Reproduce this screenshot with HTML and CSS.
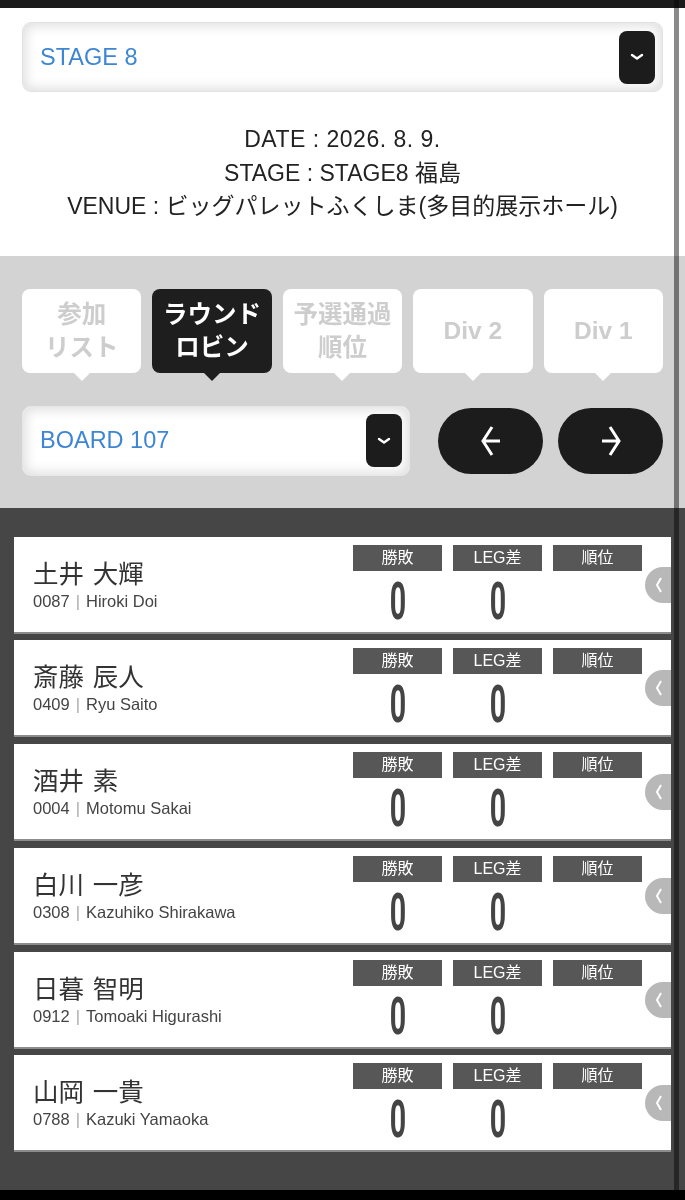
FILE: index.html
```html
<!DOCTYPE html>
<html lang="ja">
<head>
<meta charset="utf-8">
<title>STAGE 8</title>
<link rel="stylesheet" href="styles.css">
</head>
<body>
<div class="page">
<div class="topbar"></div>
<section class="head">
  <div class="select stage-select">
    <span class="select-text">STAGE 8</span>
    <span class="select-btn"><svg width="14" height="8" viewBox="0 0 14 8"><path d="M2 2 L7 5.5 L12 2" fill="none" stroke="#fff" stroke-width="2.4" stroke-linecap="round" stroke-linejoin="round"/></svg></span>
  </div>
  <div class="info">
    <p>DATE : 2026. 8. 9.</p>
    <p>STAGE : STAGE8 福島</p>
    <p>VENUE : ビッグパレットふくしま(多目的展示ホール)</p>
  </div>
</section>
<section class="controls">
  <nav class="tabs">
    <div class="tab">参加<br>リスト</div>
    <div class="tab active">ラウンド<br>ロビン</div>
    <div class="tab">予選通過<br>順位</div>
    <div class="tab">Div 2</div>
    <div class="tab">Div 1</div>
  </nav>
  <div class="board-row">
    <div class="select board-select">
      <span class="select-text">BOARD 107</span>
      <span class="select-btn"><svg width="14" height="8" viewBox="0 0 14 8"><path d="M2 2 L7 5.5 L12 2" fill="none" stroke="#fff" stroke-width="2.4" stroke-linecap="round" stroke-linejoin="round"/></svg></span>
    </div>
    <button class="nav-btn"><svg width="24" height="32" viewBox="0 0 24 32"><path d="M13 2 L4 16 L13 30 M4 16 H21" fill="none" stroke="#fff" stroke-width="3"/></svg></button>
    <button class="nav-btn"><svg width="24" height="32" viewBox="0 0 24 32"><path d="M11 2 L20 16 L11 30 M20 16 H3" fill="none" stroke="#fff" stroke-width="3"/></svg></button>
  </div>
</section>
<section class="players">
  <div class="card">
    <div class="player"><div class="name">土井 大輝</div><div class="sub">0087<span class="bar">|</span>Hiroki Doi</div></div>
    <div class="stats"><div class="sh">勝敗</div><div class="sh">LEG差</div><div class="sh">順位</div><div class="sv"><span>0</span></div><div class="sv"><span>0</span></div><div class="sv"></div></div>
    <div class="handle"><svg width="10" height="18" viewBox="0 0 10 18"><path d="M7 2 L3 9 L7 16" fill="none" stroke="#fff" stroke-width="2"/></svg></div>
  </div>
  <div class="card">
    <div class="player"><div class="name">斎藤 辰人</div><div class="sub">0409<span class="bar">|</span>Ryu Saito</div></div>
    <div class="stats"><div class="sh">勝敗</div><div class="sh">LEG差</div><div class="sh">順位</div><div class="sv"><span>0</span></div><div class="sv"><span>0</span></div><div class="sv"></div></div>
    <div class="handle"><svg width="10" height="18" viewBox="0 0 10 18"><path d="M7 2 L3 9 L7 16" fill="none" stroke="#fff" stroke-width="2"/></svg></div>
  </div>
  <div class="card">
    <div class="player"><div class="name">酒井 素</div><div class="sub">0004<span class="bar">|</span>Motomu Sakai</div></div>
    <div class="stats"><div class="sh">勝敗</div><div class="sh">LEG差</div><div class="sh">順位</div><div class="sv"><span>0</span></div><div class="sv"><span>0</span></div><div class="sv"></div></div>
    <div class="handle"><svg width="10" height="18" viewBox="0 0 10 18"><path d="M7 2 L3 9 L7 16" fill="none" stroke="#fff" stroke-width="2"/></svg></div>
  </div>
  <div class="card">
    <div class="player"><div class="name">白川 一彦</div><div class="sub">0308<span class="bar">|</span>Kazuhiko Shirakawa</div></div>
    <div class="stats"><div class="sh">勝敗</div><div class="sh">LEG差</div><div class="sh">順位</div><div class="sv"><span>0</span></div><div class="sv"><span>0</span></div><div class="sv"></div></div>
    <div class="handle"><svg width="10" height="18" viewBox="0 0 10 18"><path d="M7 2 L3 9 L7 16" fill="none" stroke="#fff" stroke-width="2"/></svg></div>
  </div>
  <div class="card">
    <div class="player"><div class="name">日暮 智明</div><div class="sub">0912<span class="bar">|</span>Tomoaki Higurashi</div></div>
    <div class="stats"><div class="sh">勝敗</div><div class="sh">LEG差</div><div class="sh">順位</div><div class="sv"><span>0</span></div><div class="sv"><span>0</span></div><div class="sv"></div></div>
    <div class="handle"><svg width="10" height="18" viewBox="0 0 10 18"><path d="M7 2 L3 9 L7 16" fill="none" stroke="#fff" stroke-width="2"/></svg></div>
  </div>
  <div class="card">
    <div class="player"><div class="name">山岡 一貴</div><div class="sub">0788<span class="bar">|</span>Kazuki Yamaoka</div></div>
    <div class="stats"><div class="sh">勝敗</div><div class="sh">LEG差</div><div class="sh">順位</div><div class="sv"><span>0</span></div><div class="sv"><span>0</span></div><div class="sv"></div></div>
    <div class="handle"><svg width="10" height="18" viewBox="0 0 10 18"><path d="M7 2 L3 9 L7 16" fill="none" stroke="#fff" stroke-width="2"/></svg></div>
  </div>
</section>
<div class="bottombar"></div>
<div class="scrollline"></div>
</div>
</body>
</html>
```
FILE: styles.css
```css
* { box-sizing: border-box; }
html, body { margin: 0; padding: 0; }
body {
  background: #000;
  font-family: "Liberation Sans", "Noto Sans CJK JP", sans-serif;
}
.page {
  position: relative;
  width: 685px;
}
.topbar { height: 8px; background: #1b1b1b; }
.bottombar { height: 9px; background: #000; }

.head {
  background: #fff;
  padding: 14px 22px 32px;
}
.select {
  display: flex;
  align-items: center;
  justify-content: space-between;
  height: 70px;
  background: #fff;
  border-radius: 9px;
  border: 1px solid #e2e2e2;
  box-shadow: inset 0 0 12px 3px rgba(0,0,0,0.13);
  padding: 0 7px 0 17px;
}
.select-text {
  color: #3d86d3;
  font-size: 23.5px;
}
.select-btn {
  width: 36px;
  height: 53px;
  background: #1c1c1c;
  border-radius: 8px;
  display: flex;
  align-items: center;
  justify-content: center;
}
.info {
  margin-top: 31px;
  text-align: center;
  color: #222;
  font-size: 23px;
  line-height: 33.5px;
}
.info p { margin: 0; }
.info p:first-child { letter-spacing: 0.5px; }

.controls {
  background: #d3d3d3;
  padding: 33px 22px 32px;
}
.tabs {
  display: grid;
  grid-template-columns: repeat(5, 1fr);
  gap: 11px;
}
.tab {
  position: relative;
  height: 84px;
  background: #fff;
  border-radius: 8px;
  color: #cdcdcd;
  font-weight: bold;
  font-size: 24.5px;
  line-height: 33px;
  display: flex;
  align-items: center;
  justify-content: center;
  text-align: center;
}
.tab::after {
  content: "";
  position: absolute;
  left: 50%;
  bottom: -8px;
  margin-left: -8px;
  border-left: 8px solid transparent;
  border-right: 8px solid transparent;
  border-top: 8px solid #fff;
}
.tab.active { background: #1e1e1e; color: #fff; }
.tab.active::after { border-top-color: #1e1e1e; }

.board-row {
  display: flex;
  align-items: center;
  margin-top: 33px;
}
.board-select {
  width: 388px;
  border-color: #e6e6e6;
}
.nav-btn {
  width: 105px;
  height: 66px;
  border: 0;
  border-radius: 33px;
  background: #1c1c1c;
  display: flex;
  align-items: center;
  justify-content: center;
  padding: 0;
  margin-left: 28px;
}
.nav-btn + .nav-btn { margin-left: 15px; }

.players {
  background: #464646;
  padding: 29px 14px 38px;
  display: flex;
  flex-direction: column;
  gap: 6.8px;
}
.card {
  height: 97px;
  background: #fff;
  border-bottom: 2px solid #8c8c8c;
  display: flex;
  padding-left: 19px;
}
.player {
  flex: 1;
  padding-top: 20px;
}
.name {
  font-family: "Noto Sans CJK JP", sans-serif;
  font-size: 25.5px;
  line-height: 30px;
  color: #333;
  word-spacing: 3px;
}
.sub {
  margin-top: 4px;
  font-size: 16.5px;
  line-height: 20px;
  color: #444;
}
.bar { color: #aaa; margin: 0 6px; }
.stats {
  display: grid;
  grid-template-columns: repeat(3, 89px);
  grid-template-rows: 26px auto;
  column-gap: 11px;
  margin-top: 8px;
}
.sh {
  background: #575757;
  color: #fff;
  font-family: "Liberation Sans", "Noto Sans CJK JP", sans-serif;
  font-size: 16px;
  line-height: 26px;
  text-align: center;
}
.sv {
  text-align: center;
  margin-top: 5px;
  font-family: Roboto, "Liberation Sans", sans-serif;
  font-weight: 700;
  font-size: 52px;
  line-height: 52px;
  color: #444;
}
.sv span { display: inline-block; transform: scaleX(0.55); }
.handle {
  width: 26px;
  height: 36px;
  margin: 30px 0 0 3px;
  background: #b8b8b8;
  border-radius: 18px 0 0 18px;
  display: flex;
  align-items: center;
  justify-content: center;
  padding-left: 2px;
}
.scrollline {
  position: absolute;
  top: 0;
  bottom: 0;
  left: 674px;
  width: 5px;
  background: #8a8a8a;
  mix-blend-mode: multiply;
  z-index: 100;
}
```
